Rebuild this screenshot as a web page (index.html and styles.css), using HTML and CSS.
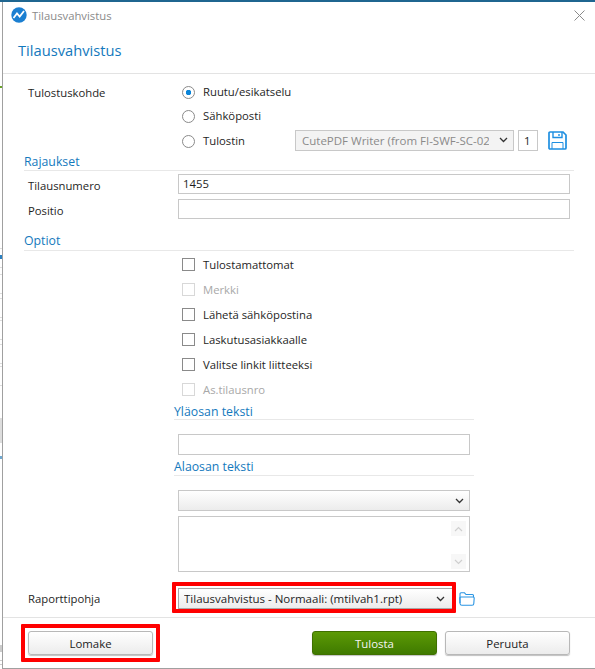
FILE: index.html
```html
<!DOCTYPE html>
<html lang="en">
<head>
    <meta charset="UTF-8">
    <title>Tilausvahvistus</title>
    <link rel="stylesheet" href="styles.css">
</head>
<body>
    <div class="window">
        <div class="edge"></div>
        <div class="dialog">
            <div class="titlebar">
                <svg class="app-icon" width="16" height="16" viewBox="0 0 16 16">
                    <circle cx="8" cy="8" r="7.7" fill="#1b7fd1"/>
                    <path d="M2.5 11 L6 6.5 L8.7 9.5 L13 4" fill="none" stroke="#fff" stroke-width="1.8"/>
                </svg>
                <span class="title-text">Tilausvahvistus</span>
                <svg class="close" width="11" height="11" viewBox="0 0 11 11">
                    <path d="M0.5 0.5 L10.5 10.5 M10.5 0.5 L0.5 10.5" stroke="#8a8a8a" stroke-width="1" fill="none"/>
                </svg>
            </div>
            <h1 class="heading">Tilausvahvistus</h1>

            <main class="content">
                <div class="row row-target">
                    <div class="label">Tulostuskohde</div>
                    <div class="options">
                        <div class="option"><span class="radio radio-on"></span>Ruutu/esikatselu</div>
                        <div class="option"><span class="radio"></span>Sähköposti</div>
                        <div class="option">
                            <span class="radio"></span><span class="printer-label">Tulostin</span>
                            <div class="select select-disabled printer-select">
                                <span class="select-text">CutePDF Writer (from FI-SWF-SC-02</span>
                                <svg class="chev" width="9" height="6" viewBox="0 0 9 6"><path d="M1 1 L4.5 4.5 L8 1" fill="none" stroke="#333" stroke-width="1.3"/></svg>
                            </div>
                            <div class="copies">1</div>
                            <svg class="save" width="19" height="19" viewBox="0 0 19 19">
                                <path d="M1 2 a1 1 0 0 1 1-1 H15 L18 4 V17 a1 1 0 0 1-1 1 H2 a1 1 0 0 1-1-1 Z" fill="none" stroke="#1e8fe1" stroke-width="1.7"/>
                                <path d="M5 1 V6.5 H14 V1 M11 3 V5" fill="none" stroke="#1e8fe1" stroke-width="1.4"/>
                                <path d="M4 18 V11.5 H15 V18" fill="none" stroke="#1e8fe1" stroke-width="1"/>
                            </svg>
                        </div>
                    </div>
                </div>

                <h2 class="section section-limits">Rajaukset</h2>
                <div class="row row-field">
                    <div class="label">Tilausnumero</div>
                    <div class="input input-wide">1455</div>
                </div>
                <div class="row row-field">
                    <div class="label">Positio</div>
                    <div class="input input-wide"></div>
                </div>

                <h2 class="section section-options">Optiot</h2>
                <div class="checks">
                    <div class="check"><span class="box"></span>Tulostamattomat</div>
                    <div class="check check-disabled"><span class="box"></span>Merkki</div>
                    <div class="check"><span class="box"></span>Lähetä sähköpostina</div>
                    <div class="check"><span class="box"></span>Laskutusasiakkaalle</div>
                    <div class="check"><span class="box"></span>Valitse linkit liitteeksi</div>
                    <div class="check check-disabled"><span class="box"></span>As.tilausnro</div>
                </div>

                <div class="texts">
                    <h2 class="section section-top">Yläosan teksti</h2>
                    <div class="input input-top"></div>
                    <h2 class="section section-bottom">Alaosan teksti</h2>
                    <div class="select select-bottom">
                        <span class="select-text"></span>
                        <svg class="chev" width="9" height="6" viewBox="0 0 9 6"><path d="M1 1 L4.5 4.5 L8 1" fill="none" stroke="#333" stroke-width="1.3"/></svg>
                    </div>
                    <div class="textarea">
                        <div class="scroll-btn"><svg width="9" height="6" viewBox="0 0 9 6"><path d="M1 5 L4.5 1.5 L8 5" fill="none" stroke="#cfcfcf" stroke-width="1.2"/></svg></div>
                        <div class="scroll-btn"><svg width="9" height="6" viewBox="0 0 9 6"><path d="M1 1 L4.5 4.5 L8 1" fill="none" stroke="#cfcfcf" stroke-width="1.2"/></svg></div>
                    </div>
                </div>

                <div class="row row-template">
                    <div class="label">Raporttipohja</div>
                    <div class="select select-report mark-report">
                        <span class="select-text">Tilausvahvistus - Normaali: (mtilvah1.rpt)</span>
                        <svg class="chev" width="9" height="6" viewBox="0 0 9 6"><path d="M1 1 L4.5 4.5 L8 1" fill="none" stroke="#333" stroke-width="1.3"/></svg>
                    </div>
                    <svg class="folder" width="16" height="14" viewBox="0 0 16 14">
                        <path d="M1 11 V1.8 a1 1 0 0 1 1-1 H5.5 L7 2.5 H13.5 a1 1 0 0 1 1 1 V5" fill="none" stroke="#2b95e3" stroke-width="1.1"/>
                        <path d="M0.8 6 a1 1 0 0 1 1-1 H14.2 a1 1 0 0 1 1 1 L14.8 11.5 a1.8 1.8 0 0 1-1.8 1.8 H3 a2 2 0 0 1-2-1.8 Z" fill="none" stroke="#2b95e3" stroke-width="1.1"/>
                    </svg>
                </div>
            </main>

            <footer class="footer">
                <button class="button mark-button">Lomake</button>
                <div class="footer-right">
                    <button class="button button-primary">Tulosta</button>
                    <button class="button">Peruuta</button>
                </div>
            </footer>
        </div>
    </div>
</body>
</html>
```

FILE: styles.css
```css
body {
    margin: 0;
    background-color: #fff;
    color: #1e1e1e;
    font-family: "Open Sans", "Noto Sans", Arial, sans-serif;
    font-size: 11.3px;
    overflow: hidden;
}
.window {
    display: flex;
    box-sizing: border-box;
    height: 669px;
    border-top: 2px solid #1f6690;
}
/* bits of the page behind the dialog */
.edge {
    flex: none;
    width: 2px;
    background: linear-gradient(to bottom,
        #fff 84px, #6aa32a 84px 86px, #fff 86px,
        #fff 246px, #ddd 246px 247px, #fff 247px,
        #fff 253px, #2a7fc0 253px 257px, #fff 257px,
        #fff 265px, #ddd 265px 266px, #fff 266px,
        #fff 272px, #ddd 272px 273px, #fff 273px,
        #fff 291px, #ddd 291px 292px, #fff 292px,
        #fff 296px, #ddd 296px 297px, #fff 297px,
        #fff 315px, #ddd 315px 316px, #fff 316px,
        #fff 318px, #ddd 318px 319px, #fff 319px,
        #fff 337px, #ddd 337px 338px, #fff 338px,
        #fff 342px, #ddd 342px 343px, #fff 343px,
        #fff 361px, #ddd 361px 362px, #fff 362px,
        #fff 364px, #ddd 364px 365px, #fff 365px,
        #fff 383px, #ddd 383px 384px, #fff 384px,
        #fff 416px, #ddd 416px 441px, #fff 441px,
        #fff 454px, #6fa8d0 454px 457px, #fff 457px,
        #fff 643px, #ccc 643px 650px, #fff 650px,
        #fff 658px, #ccc 658px 659px, #fff 659px,
        #fff 662px, #ccc 662px 663px, #fff 663px);
}
.dialog {
    flex: 1;
    box-sizing: border-box;
    height: 667px;
    background: #fff;
    border-left: 1px solid #a0a0a0;
    border-bottom: 1px solid #a0a0a0;
}
.titlebar {
    display: flex;
    align-items: center;
    height: 26px;
    padding-left: 8px;
    padding-right: 10px;
}
.app-icon {
    margin-right: 5px;
}
.title-text {
    color: #8a8a8a;
}
.close {
    margin-left: auto;
}
.heading {
    margin: 0;
    height: 46px;
    padding: 12px 0 0 15px;
    box-sizing: border-box;
    border-bottom: 1px solid #e3e3e3;
    color: #1479bd;
    font-size: 14.7px;
    font-weight: 400;
}
.content {
    height: 544px;
    box-sizing: border-box;
    padding: 5px 21px 0 25px;
    border-bottom: 1px solid #e3e3e3;
}
.row {
    display: flex;
    align-items: center;
}
.label {
    width: 150px;
    flex: none;
}
.row-target {
    align-items: flex-start;
}
.row-target .label {
    padding-top: 6px;
}
.options {
    flex: 1;
}
.option {
    display: flex;
    align-items: center;
    height: 24.5px;
}
.radio {
    box-sizing: border-box;
    flex: none;
    width: 13px;
    height: 13px;
    margin-top: 2px;
    margin-left: 4px;
    margin-right: 8px;
    border: 1px solid #8a8a8a;
    border-radius: 50%;
}
.radio-on {
    background: radial-gradient(circle, #0a84d8 0 2.5px, #fff 3px);
}
.printer-label {
    width: 92px;
}
.select {
    display: flex;
    align-items: center;
    box-sizing: border-box;
    height: 21px;
    padding: 0 5px;
    font-size: 11.5px;
    border: 1px solid #c8c8c8;
    background: linear-gradient(#fff, #ececec);
}
.select-text {
    flex: 1;
    overflow: hidden;
    white-space: nowrap;
}
.select-disabled {
    color: #8a8a8a;
    background: #f3f3f3;
}
.printer-select {
    width: 219px;
    padding-left: 6px;
}
.printer-select .select-text {
    flex: none;
    width: 187px;
    margin-right: auto;
}
.copies {
    box-sizing: border-box;
    width: 20px;
    height: 21px;
    margin-left: 4px;
    padding: 2px 0 0 5px;
    border: 1px solid #c8c8c8;
}
.save {
    margin-left: 10px;
}
.section {
    margin: 0;
    color: #1479bd;
    font-size: 12.3px;
    font-weight: 400;
    border-bottom: 1px solid #e8e8e8;
}
.section-limits {
    margin-top: -1.5px;
    margin-left: -4px;
    height: 19px;
    line-height: 22px;
}
.section-options {
    margin-top: 9px;
    margin-left: -4px;
    height: 20px;
    line-height: 22px;
}
.input {
    box-sizing: border-box;
    height: 20px;
    padding: 0 4px;
    line-height: 17px;
    border: 1px solid #c8c8c8;
    background: #fff;
}
.input-wide {
    width: 392px;
}
.row-field {
    height: 25px;
}
.row-field .label {
    padding-top: 3px;
}
.checks {
    margin-top: 0.5px;
    margin-left: 153px;
}
.check {
    display: flex;
    align-items: center;
    height: 25px;
}
.box {
    box-sizing: border-box;
    width: 13px;
    height: 13px;
    margin-left: 1px;
    margin-right: 8px;
    border: 1px solid #8a8a8a;
}
.check-disabled {
    color: #a8a8a8;
}
.check-disabled .box {
    border-color: #d8d8d8;
}
.texts {
    margin-left: 146px;
    width: 300px;
}
.section-top {
    margin-top: 1px;
    height: 16.5px;
    line-height: 17px;
}
.input-top {
    margin: 14px 0 0 4px;
    width: 292px;
    height: 21px;
}
.section-bottom {
    height: 17px;
    line-height: 18px;
    margin-top: 3px;
}
.select-bottom {
    margin: 14px 0 0 4px;
    width: 292px;
}
.textarea {
    box-sizing: border-box;
    display: flex;
    flex-direction: column;
    align-items: flex-end;
    justify-content: space-between;
    margin: 5px 0 0 4px;
    width: 292px;
    height: 56px;
    padding: 4px 3px 2px 0;
    border: 1px solid #c8c8c8;
}
.scroll-btn {
    display: flex;
    align-items: center;
    justify-content: center;
    width: 15px;
    height: 15px;
    background: #f7f7f7;
}
.row-template {
    margin-top: 16px;
    height: 21px;
}
.select-report {
    position: relative;
    width: 275px;
    padding-right: 7px;
    border-color: #a8a8a8;
}
/* red marks drawn over the screenshot */
.mark-report::after,
.mark-button::after {
    content: "";
    position: absolute;
    border: 4px solid #f00;
    border-radius: 1px;
}
.mark-report::after {
    top: -7px;
    right: -4px;
    bottom: -5px;
    left: -7px;
}
.mark-button::after {
    top: -8px;
    right: -8px;
    bottom: -8px;
    left: -8px;
}
.folder {
    margin-left: 6px;
}
.footer {
    display: flex;
    justify-content: space-between;
    padding: 13px 25px 0 25px;
}
.footer-right {
    display: flex;
    gap: 8px;
}
.button {
    position: relative;
    box-sizing: border-box;
    width: 125px;
    height: 24px;
    padding: 0;
    color: #222;
    font-family: inherit;
    font-size: 11.4px;
    border: 1px solid #b8b8b8;
    border-radius: 3px;
    background: linear-gradient(#fff, #ececec);
    box-shadow: 0 1px 1px rgba(0, 0, 0, 0.25);
}
.button-primary {
    color: #f4f4f4;
    border-color: #3f7000;
    background: linear-gradient(#5c9a05, #3f7a00);
}
```
